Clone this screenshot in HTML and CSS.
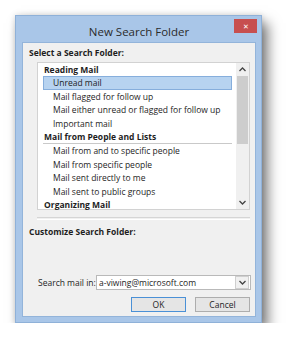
FILE: index.html
```html
<!DOCTYPE html>
<html lang="en">
<head>
    <meta charset="UTF-8">
    <title>New Search Folder</title>
    <link rel="stylesheet" href="styles.css">
</head>
<body>
    <div class="window">
        <div class="titlebar">
            <span class="title">New Search Folder</span>
            <span class="close">&#x2715;</span>
        </div>
        <div class="content">
            <div class="label">Select a Search Folder:</div>

            <div class="listbox">
                <div class="items">
                    <div class="row group">Reading Mail</div>
                    <div class="row item selected">Unread mail</div>
                    <div class="row item">Mail flagged for follow up</div>
                    <div class="row item">Mail either unread or flagged for follow up</div>
                    <div class="row item">Important mail</div>
                    <div class="row group divided">Mail from People and Lists</div>
                    <div class="row item">Mail from and to specific people</div>
                    <div class="row item">Mail from specific people</div>
                    <div class="row item">Mail sent directly to me</div>
                    <div class="row item">Mail sent to public groups</div>
                    <div class="row group">Organizing Mail</div>
                </div>
                <div class="scrollbar">
                    <svg class="arrow" width="7" height="5" viewBox="0 0 7 5"><path d="M0.5 4 L3.5 1 L6.5 4" fill="none" stroke="#444" stroke-width="1.3"/></svg>
                    <div class="track"><div class="thumb"></div></div>
                    <svg class="arrow" width="7" height="5" viewBox="0 0 7 5"><path d="M0.5 1 L3.5 4 L6.5 1" fill="none" stroke="#444" stroke-width="1.3"/></svg>
                </div>
            </div>

            <div class="groove"></div>

            <div class="label">Customize Search Folder:</div>

            <div class="search-row">
                <span class="search-label">Search mail in:</span>
                <div class="combo">
                    <span class="combo-text">a-viwing@microsoft.com</span>
                    <span class="combo-btn">
                        <svg width="7" height="5" viewBox="0 0 7 5"><path d="M0.5 1 L3.5 4 L6.5 1" fill="none" stroke="#444" stroke-width="1.3"/></svg>
                    </span>
                </div>
            </div>

            <div class="buttons">
                <button class="btn default">OK</button>
                <button class="btn">Cancel</button>
            </div>
        </div>
    </div>
</body>
</html>
```

FILE: styles.css
```css
body {
    margin: 0;
    background: #fff;
    font-family: "Open Sans", "Noto Sans", sans-serif;
    font-size: 8.5px;
    color: #1e1e1e;
}
.window {
    position: relative;
    margin: 15px 0 0 15px;
    width: 247px;
    height: 308px;
    box-sizing: border-box;
    background: #a9c6e8;
    border: 1px solid #8fb1d8;
    padding: 0 5px 5px 6px;
    display: flex;
    flex-direction: column;
    box-shadow: 6px 8px 12px rgba(0, 0, 0, 0.5), 0 0 6px rgba(0, 0, 0, 0.15);
}
.titlebar {
    height: 26px;
    display: flex;
    justify-content: center;
    align-items: center;
}
.title {
    font-size: 11.5px;
    color: #2b2b2b;
    margin-top: 4px;
}
.close {
    position: absolute;
    top: 3px;
    right: 4px;
    width: 23px;
    height: 14px;
    background: #c74f4f;
    color: #fff;
    font-size: 7px;
    display: flex;
    justify-content: center;
    align-items: center;
}
.content {
    flex: 1;
    background: #f0f0f0;
    border: 1px solid #93b4da;
    padding: 3px 0 0 6px;
    display: flex;
    flex-direction: column;
}
.label {
    font-weight: bold;
    line-height: 13px;
    height: 13px;
    white-space: nowrap;
}
.listbox {
    margin: 3px 0 0 8px;
    width: 213px;
    height: 148px;
    box-sizing: border-box;
    background: #fff;
    border: 1px solid #d2d2d2;
    display: flex;
}
.items {
    flex: 1;
    padding: 0 4px 0 5px;
}
.row {
    height: 13.4px;
    line-height: 13.4px;
    white-space: nowrap;
}
.group {
    font-weight: bold;
    padding-left: 1px;
}
.divided {
    border-bottom: 1px solid #c9c9c9;
}
.item {
    padding-left: 10px;
}
.selected {
    background: #b7d3f0;
    box-shadow: inset 0 0 0 1px #86aedc;
}
.scrollbar {
    width: 13px;
    background: #f0f0f0;
    display: flex;
    flex-direction: column;
    align-items: center;
}
.arrow {
    margin: 4px 0;
}
.track {
    flex: 1;
    width: 11px;
}
.thumb {
    height: 68px;
    background: #cdcdcd;
}
.groove {
    margin: 7px 0 0 8px;
    width: 213px;
    height: 1px;
    border-top: 1px solid #d5d5d5;
    border-bottom: 1px solid #fff;
}
.groove + .label {
    margin-top: 5px;
}
.search-row {
    margin: 37px 0 0 9px;
    display: flex;
    align-items: center;
}
.search-label {
    width: 58px;
    white-space: nowrap;
}
.combo {
    width: 155px;
    height: 15px;
    box-sizing: border-box;
    background: #fff;
    border: 1px solid #b9b9b9;
    display: flex;
    align-items: center;
}
.combo-text {
    flex: 1;
    padding-left: 2px;
    white-space: nowrap;
}
.combo-btn {
    width: 12px;
    height: 11px;
    margin-right: 1px;
    background: #f0f0f0;
    border: 1px solid #cfcfcf;
    display: flex;
    justify-content: center;
    align-items: center;
}
.buttons {
    margin: 7px 0 0 102px;
    display: flex;
    gap: 9px;
}
.btn {
    width: 55px;
    height: 15px;
    padding: 0;
    font-family: inherit;
    font-size: 8.5px;
    color: #1e1e1e;
    background: #e5e5e5;
    border: 1px solid #adadad;
}
.btn.default {
    border-color: #4a90d6;
}
```
